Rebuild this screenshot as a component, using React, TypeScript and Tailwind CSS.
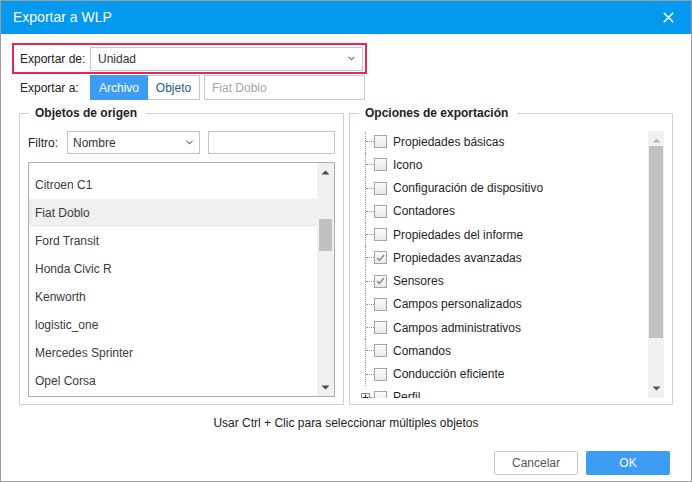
import React from 'react';

const sourceItems = ['Citroen C1', 'Fiat Doblo', 'Ford Transit', 'Honda Civic R', 'Kenworth', 'logistic_one', 'Mercedes Sprinter', 'Opel Corsa'];

const options: { label: string; checked?: boolean }[] = [
    { label: 'Propiedades básicas' },
    { label: 'Icono' },
    { label: 'Configuración de dispositivo' },
    { label: 'Contadores' },
    { label: 'Propiedades del informe' },
    { label: 'Propiedades avanzadas', checked: true },
    { label: 'Sensores', checked: true },
    { label: 'Campos personalizados' },
    { label: 'Campos administrativos' },
    { label: 'Comandos' },
    { label: 'Conducción eficiente' },
];

function Chevron() {
    return (
        <svg width="7" height="5" viewBox="0 0 7 5" className="shrink-0">
            <path d="M0.5 0.8 L3.5 3.8 L6.5 0.8" stroke="#6b6b6b" strokeWidth="1.1" fill="none" />
        </svg>
    );
}

function Arrow({ up, color }: { up?: boolean; color: string }) {
    return (
        <svg width="9" height="5" viewBox="0 0 9 5">
            <path d={up ? 'M0.5 4.5 L4.5 0.5 L8.5 4.5 Z' : 'M0.5 0.5 L8.5 0.5 L4.5 4.5 Z'} fill={color} />
        </svg>
    );
}

function Checkbox({ checked }: { checked?: boolean }) {
    return (
        <div className="flex h-[13px] w-[13px] shrink-0 items-center justify-center border border-[#a3a3a3] bg-gradient-to-b from-[#fbfbfb] to-[#e9e9e9]">
            {checked && (
                <svg width="9" height="8" viewBox="0 0 9 8">
                    <path d="M1 4 L3.4 6.4 L8 1" stroke="#8a8a8a" strokeWidth="1.5" fill="none" />
                </svg>
            )}
        </div>
    );
}

export default function App() {
    return (
        <div className="flex h-[482px] w-[692px] flex-col border border-[#9c9c9c] bg-white font-['Liberation_Sans',Arial,sans-serif] text-[12px] text-[#333]">
            <div className="flex h-[33px] shrink-0 items-center justify-between bg-[#0299ee] pl-[12px] pr-[17px] text-[14px] text-white">
                <span>Exportar a WLP</span>
                <svg width="11" height="11" viewBox="0 0 11 11">
                    <path d="M0.8 0.8 L10.2 10.2 M10.2 0.8 L0.8 10.2" stroke="#fff" strokeWidth="1.6" />
                </svg>
            </div>

            <div className="pl-[11px] pt-[9px]">
                <div className="flex h-[31px] w-[355px] items-center border-2 border-[#e8255b] pl-[6px]">
                    <span className="w-[70px] shrink-0 text-[#222]">Exportar de:</span>
                    <div className="flex h-[24px] w-[273px] items-center justify-between border border-[#c4c4c4] bg-white pl-[7px] pr-[7px]">
                        <span>Unidad</span>
                        <Chevron />
                    </div>
                </div>
                <div className="mt-px flex h-[25px] items-center pl-[8px]">
                    <span className="w-[70px] shrink-0 text-[#222]">Exportar a:</span>
                    <div className="flex h-full">
                        <button type="button" className="w-[58px] bg-[#3d9df5] text-white">Archivo</button>
                        <button type="button" className="w-[52px] border border-l-0 border-[#c8c8c8] text-[#215a96]">Objeto</button>
                    </div>
                    <div className="ml-[4px] flex h-full w-[161px] items-center border border-[#c8c8c8] pl-[7px] text-[#a6a6a6]">Fiat Doblo</div>
                </div>
            </div>

            <div className="mt-[6px] flex gap-[5px] px-[18px]">
                <fieldset className="w-[325px] border border-[#d0d0d0] px-[8px] pb-[6px]">
                    <legend className="ml-[1px] pl-[6px] pr-[9px] text-[12px] font-bold leading-[14px] text-[#222]">Objetos de origen</legend>
                    <div className="mt-[11px] flex h-[23px] items-center">
                        <span className="w-[39px] shrink-0 text-[#222]">Filtro:</span>
                        <div className="flex h-full w-[133px] items-center justify-between border border-[#c4c4c4] pl-[5px] pr-[6px]">
                            <span>Nombre</span>
                            <Chevron />
                        </div>
                        <div className="ml-[8px] h-full w-[127px] border border-[#c4c4c4]" />
                    </div>
                    <div className="mt-[8px] flex h-[235px] border border-[#ababab]">
                        <div className="flex-1 overflow-hidden pt-[8px]">
                            {sourceItems.map((item) => (
                                <div
                                    key={item}
                                    className={`flex h-[28px] items-center pl-[6px] text-[#3a3a3a] ${item === 'Fiat Doblo' ? 'bg-[#efefef]' : ''}`}
                                >
                                    {item}
                                </div>
                            ))}
                        </div>
                        <div className="flex w-[17px] flex-col items-center bg-[#f0f0f0] pt-[7px] pb-[6px]">
                            <Arrow up color="#4a4a4a" />
                            <div className="mt-[44px] h-[32px] w-[13px] bg-[#c1c1c1]" />
                            <div className="flex-1" />
                            <Arrow color="#4a4a4a" />
                        </div>
                    </div>
                </fieldset>

                <fieldset className="w-[325px] border border-[#d0d0d0] px-[8px] pb-[6px]">
                    <legend className="ml-[1px] pl-[6px] pr-[9px] text-[12px] font-bold leading-[14px] text-[#222]">Opciones de exportación</legend>
                    <div className="mt-[11px] flex h-[267px]">
                        <div className="flex-1 overflow-hidden">
                            <div className="-mt-[1px]">
                                {options.map((option) => (
                                    <div key={option.label} className="flex h-[23.25px] items-center text-[#1e1e1e]">
                                        <div className="w-[7px] shrink-0" />
                                        <div className="h-full w-px shrink-0 border-l border-dotted border-[#9a9a9a]" />
                                        <div className="h-0 w-[8px] shrink-0 border-t border-dotted border-[#9a9a9a]" />
                                        <Checkbox checked={option.checked} />
                                        <span className="ml-[6px]">{option.label}</span>
                                    </div>
                                ))}
                                <div className="flex h-[23.25px] items-center text-[#1e1e1e]">
                                    <div className="w-[3px] shrink-0" />
                                    <div className="flex h-[9px] w-[9px] shrink-0 items-center justify-center border border-[#8c8c8c] bg-white">
                                        <svg width="7" height="7" viewBox="0 0 7 7">
                                            <path d="M0.5 3.5 H6.5 M3.5 0.5 V6.5" stroke="#222" strokeWidth="1" />
                                        </svg>
                                    </div>
                                    <div className="h-0 w-[4px] shrink-0 border-t border-dotted border-[#9a9a9a]" />
                                    <Checkbox />
                                    <span className="ml-[6px]">Perfil</span>
                                </div>
                            </div>
                        </div>
                        <div className="flex w-[16px] flex-col items-center bg-[#f0f0f0] pt-[7px] pb-[7px]">
                            <Arrow up color="#b8b8b8" />
                            <div className="mt-[3px] h-[192px] w-[14px] bg-[#c1c1c1]" />
                            <div className="flex-1" />
                            <Arrow color="#555555" />
                        </div>
                    </div>
                </fieldset>
            </div>

            <div className="mt-[11px] text-center leading-[14px] text-[#222]">Usar Ctrl + Clic para seleccionar múltiples objetos</div>

            <div className="mt-[21px] flex justify-end gap-[8px] pr-[21px]">
                <button type="button" className="h-[24px] w-[84px] rounded-[2px] border border-[#c8c8c8] bg-white text-[#4d5866]">Cancelar</button>
                <button type="button" className="h-[24px] w-[84px] rounded-[2px] bg-[#3d9df5] text-white">OK</button>
            </div>
        </div>
    );
}
